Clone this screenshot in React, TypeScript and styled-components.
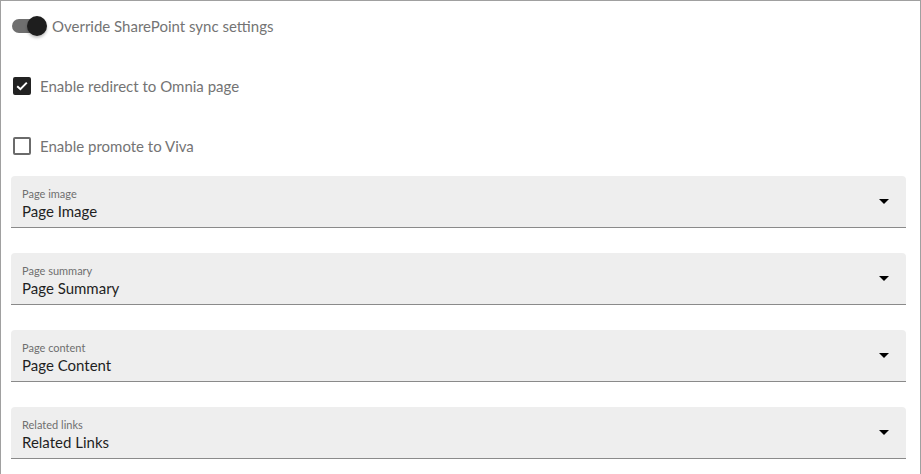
import React from 'react';
import styled, { createGlobalStyle } from 'styled-components';

const GlobalStyle = createGlobalStyle`
	html, body {
		margin: 0;
		padding: 0;
		background: #fff;
		font-family: Lato, "Open Sans", sans-serif;
	}
`;

const Panel = styled.div`
	box-sizing: border-box;
	width: 921px;
	height: 474px;
	border: 1px solid #a0a0a0;
	border-bottom: none;
	padding: 8px 14px 0 9px;
	display: flex;
	flex-direction: column;
`;

const SwitchRow = styled.label`
	display: flex;
	align-items: center;
	height: 34px;
	padding-left: 2px;
	gap: 6px;
`;

const Track = styled.span<{ on: boolean }>`
	position: relative;
	width: 34px;
	height: 14px;
	border-radius: 7px;
	background: ${(p) => (p.on ? '#6f6f6f' : '#bdbdbd')};
	flex: none;
`;

const Thumb = styled.span<{ on: boolean }>`
	position: absolute;
	top: -3px;
	left: ${(p) => (p.on ? '15px' : '-2px')};
	width: 20px;
	height: 20px;
	border-radius: 50%;
	background: #1e1e1e;
	box-shadow: 0 2px 3px rgba(0, 0, 0, 0.25);
`;

const Label = styled.span`
	font-size: 15px;
	color: #747474;
`;

const CheckRow = styled.label`
	display: flex;
	align-items: center;
	height: 34px;
	margin-top: 26px;
	padding-left: 3px;
	gap: 9px;
`;

const Box = styled.span<{ checked: boolean }>`
	box-sizing: border-box;
	width: 18px;
	height: 18px;
	border-radius: 2px;
	flex: none;
	display: flex;
	align-items: center;
	justify-content: center;
	background: ${(p) => (p.checked ? '#222' : '#fff')};
	border: 2px solid ${(p) => (p.checked ? '#222' : '#6b6b6b')};
`;

const Fields = styled.div`
	display: flex;
	flex-direction: column;
	gap: 25px;
	margin-top: 13px;
	padding-left: 1px;
`;

const Field = styled.div`
	position: relative;
	box-sizing: border-box;
	height: 52px;
	background: #eeeeee;
	border-radius: 4px 4px 0 0;
	border-bottom: 1px solid #8a8a8a;
	padding: 11px 40px 0 11px;
	display: flex;
	flex-direction: column;
`;

const FieldLabel = styled.span`
	font-size: 11px;
	line-height: 14px;
	color: #6e6e6e;
`;

const FieldValue = styled.span`
	font-size: 15px;
	line-height: 20px;
	color: #1f1f1f;
`;

const Caret = styled.span`
	position: absolute;
	right: 17px;
	top: 23px;
	width: 0;
	height: 0;
	border-left: 5px solid transparent;
	border-right: 5px solid transparent;
	border-top: 5px solid #000;
`;

const fields = [
	{ label: 'Page image', value: 'Page Image' },
	{ label: 'Page summary', value: 'Page Summary' },
	{ label: 'Page content', value: 'Page Content' },
	{ label: 'Related links', value: 'Related Links' },
];

function Checkbox({ checked, label }: { checked: boolean; label: string }) {
	return (
		<CheckRow>
			<Box checked={checked}>
				{checked && (
					<svg width="12" height="10" viewBox="0 0 12 10">
						<path d="M1.2 5.2 L4.4 8.2 L10.8 1.6" fill="none" stroke="#fff" strokeWidth="2" />
					</svg>
				)}
			</Box>
			<Label>{label}</Label>
		</CheckRow>
	);
}

export default function App() {
	return (
		<>
			<GlobalStyle />
			<Panel>
				<SwitchRow>
					<Track on>
						<Thumb on />
					</Track>
					<Label>Override SharePoint sync settings</Label>
				</SwitchRow>
				<Checkbox checked label="Enable redirect to Omnia page" />
				<Checkbox checked={false} label="Enable promote to Viva" />
				<Fields>
					{fields.map((f) => (
						<Field key={f.label}>
							<FieldLabel>{f.label}</FieldLabel>
							<FieldValue>{f.value}</FieldValue>
							<Caret />
						</Field>
					))}
				</Fields>
			</Panel>
		</>
	);
}
